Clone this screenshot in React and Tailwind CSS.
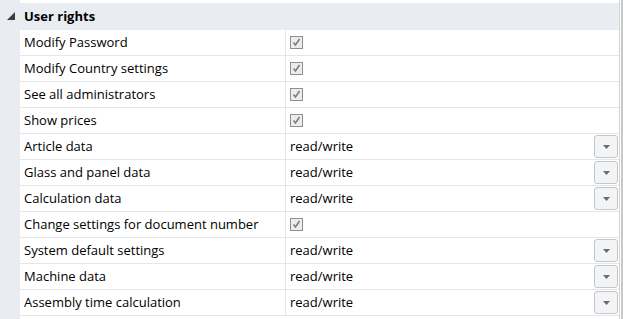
const rows = [
  { label: 'Modify Password', type: 'check' },
  { label: 'Modify Country settings', type: 'check' },
  { label: 'See all administrators', type: 'check' },
  { label: 'Show prices', type: 'check' },
  { label: 'Article data', type: 'select' },
  { label: 'Glass and panel data', type: 'select' },
  { label: 'Calculation data', type: 'select' },
  { label: 'Change settings for document number', type: 'check' },
  { label: 'System default settings', type: 'select' },
  { label: 'Machine data', type: 'select' },
  { label: 'Assembly time calculation', type: 'select' },
]

function CheckBox() {
  return (
    <div className="w-[13px] h-[13px] border border-[#8f8f8f] bg-[#ececec] flex items-center justify-center">
      <svg width="9" height="9" viewBox="0 0 9 9">
        <path d="M1.5 4.5 L3.5 7 L7.5 1" fill="none" stroke="#7a7a7a" strokeWidth="1.5" />
      </svg>
    </div>
  )
}

function DropButton() {
  return (
    <div className="w-[24px] h-[23px] rounded-[3px] border border-[#c3c6cb] bg-[#f3f4f6] flex items-center justify-center">
      <svg width="7" height="4" viewBox="0 0 7 4">
        <path d="M0 0 H7 L3.5 4 Z" fill="#6b6b6b" />
      </svg>
    </div>
  )
}

export default function App() {
  return (
    <div className="w-[623px] h-[319px] flex bg-white overflow-hidden text-[13px] text-black" style={{ fontFamily: '"Open Sans", "Noto Sans", sans-serif' }}>
      <div className="w-[20px] bg-[#e9ecf0] flex flex-col">
        <div className="h-[31px] flex items-center justify-center pl-[1px] pt-[1px]">
          <svg width="8" height="8" viewBox="0 0 8 8">
            <path d="M8 0 V8 H0 Z" fill="#3d3d3d" />
          </svg>
        </div>
      </div>
      <div className="w-[599px] flex flex-col pt-[3px]">
        <div className="h-[27px] bg-[#e9ecf0] flex items-center pl-[4px] font-bold">User rights</div>
        {rows.map((r) => (
          <div key={r.label} className="h-[26px] flex border-b border-[#e4e6ea]">
            <div className="w-[266px] flex items-center pl-[4px] border-r border-[#e4e6ea]">{r.label}</div>
            <div className="flex-1 flex items-center justify-between pl-[4px] pr-[1px]">
              {r.type === 'check' ? <CheckBox /> : <span>read/write</span>}
              {r.type === 'select' && <DropButton />}
            </div>
          </div>
        ))}
      </div>
      <div className="w-[1px] bg-[#d4d4d4]" />
      <div className="w-[1px] bg-white" />
      <div className="w-[2px] bg-[#c8c8c8]" />
    </div>
  )
}
